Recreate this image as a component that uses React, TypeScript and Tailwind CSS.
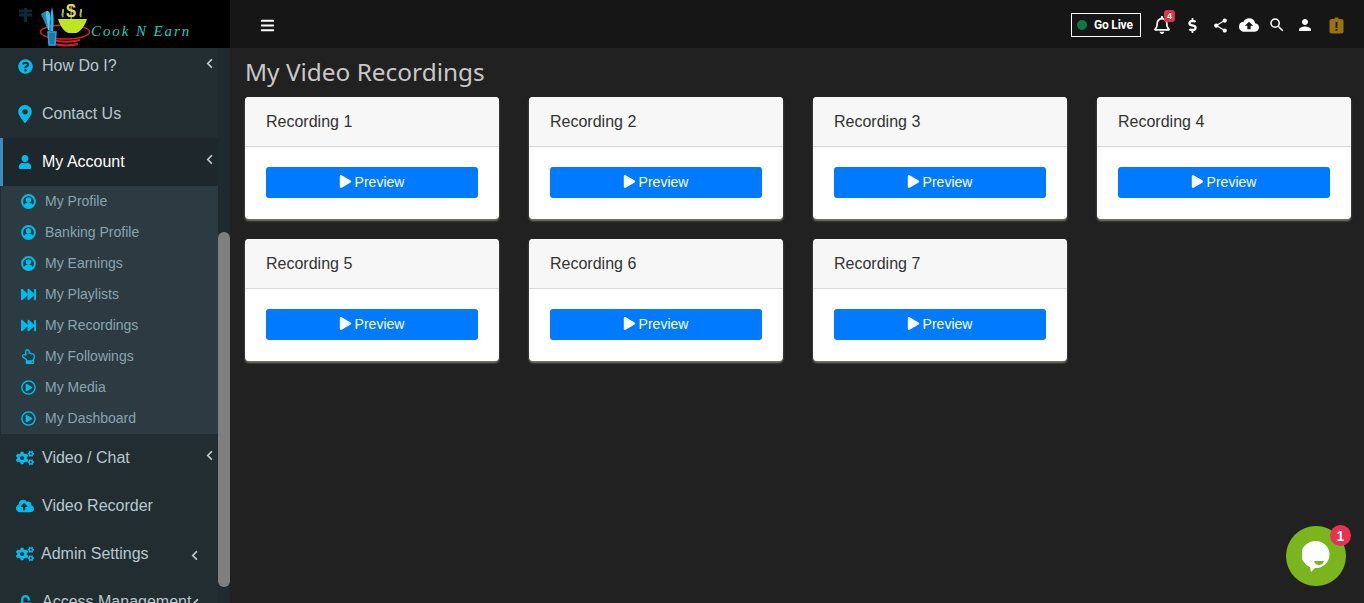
import type { ReactNode } from "react";
import {
  FaBars,
  FaChevronLeft,
  FaCloudUploadAlt,
  FaCogs,
  FaDollarSign,
  FaFastForward,
  FaMapMarkerAlt,
  FaPlay,
  FaQuestionCircle,
  FaRegBell,
  FaRegHandPointUp,
  FaRegPlayCircle,
  FaUnlockAlt,
  FaUser,
} from "react-icons/fa";
import { MdCloudUpload, MdPerson, MdSearch, MdShare } from "react-icons/md";

function UserRing() {
  return (
    <svg width="15" height="15" viewBox="0 0 15 15" className="shrink-0">
      <circle cx="7.500" cy="7.500" r="6.400" fill="none" stroke="currentColor" strokeWidth="2" />
      <circle cx="7.500" cy="6" r="2.700" fill="currentColor" />
      <path d="M2.500 12c1-2.600 3-3.400 5-3.400s4 .8 5 3.400c-1.300 1.300-3 2-5 2s-3.700-.7-5-2z" fill="currentColor" />
    </svg>
  );
}

const subItems: { label: string; icon: ReactNode }[] = [
  { label: "My Profile", icon: <UserRing /> },
  { label: "Banking Profile", icon: <UserRing /> },
  { label: "My Earnings", icon: <UserRing /> },
  { label: "My Playlists", icon: <FaFastForward /> },
  { label: "My Recordings", icon: <FaFastForward /> },
  { label: "My Followings", icon: <FaRegHandPointUp /> },
  { label: "My Media", icon: <FaRegPlayCircle /> },
  { label: "My Dashboard", icon: <FaRegPlayCircle /> },
];

const recordings = [1, 2, 3, 4, 5, 6, 7];

function Logo() {
  return (
    <div className="flex h-12 w-[230px] shrink-0 items-start overflow-hidden bg-black">
      <svg width="76" height="48" viewBox="15 0 76 48" className="ml-[15px] shrink-0">
        <path d="M19 11h13M19 15h13M25.500 8v14" stroke="#0b2a33" strokeWidth="3" fill="none" />
        <ellipse cx="65" cy="32" rx="24.500" ry="7" fill="none" stroke="#d3202a" strokeWidth="1.500" />
        <path d="M52 40c9 2 20 2 28 0M54 44c8 2 16 2 24 0" fill="none" stroke="#d3202a" strokeWidth="2" />
        <path d="M41 14l5-3 6 19-3 2z" fill="#2b86ad" />
        <path d="M47 11c3 0 4 5 3 10l-1 9h-1l-1-9c-1-5-2-10 0-10z" fill="#4cc4ee" />
        <path d="M52 7c2 7 2 15 1 24h-2c-1-9-1-17 1-24z" fill="#2cb3e8" />
        <path d="M48 32h8l-1 13h-6z" fill="#1f78a5" stroke="#2ba6dc" strokeWidth="1.500" />
        <path d="M58 19H87C85 26 80 32 76 33H69C64 32 60 26 58 19z" fill="#bde61f" />
        <path d="M63 17c-2-3 1-5 0-8M81 17c-2-3 1-5 0-8" stroke="#a3b84a" strokeWidth="2" fill="none" />
        <text x="66" y="17" fill="#dcdc50" fontSize="18" fontWeight="700" fontFamily="'Liberation Sans', sans-serif">
          $
        </text>
      </svg>
      <span className="mt-[22px] font-['Liberation_Serif',serif] text-[15px] leading-[18px] tracking-[1.9px] text-[#1fcdb4] italic">
        Cook N Earn
      </span>
    </div>
  );
}

function MenuItem({
  icon,
  label,
  chevron,
  active,
  gap = "ml-[10px]",
  chevronClass = "ml-auto mr-[3px] -mt-[6px]",
}: {
  icon: ReactNode;
  label: string;
  chevron?: boolean;
  active?: boolean;
  gap?: string;
  chevronClass?: string;
}) {
  return (
    <li
      className={`flex h-12 items-center whitespace-nowrap text-base ${
        active ? "border-l-[3px] border-[#3c8dbc] bg-[#1e282c] pl-[15px] font-medium text-white" : "pl-[18px] text-[#b8c7ce]"
      }`}
    >
      <span className="flex w-[14px] shrink-0 justify-center text-[15px] text-[#00bcea] [&>svg]:shrink-0">{icon}</span>
      <span className={gap}>{label}</span>
      {chevron ? <FaChevronLeft className={`shrink-0 text-[11px] text-[#b8c7ce] ${chevronClass}`} /> : null}
    </li>
  );
}

function Sidebar() {
  return (
    <aside className="flex h-[603px] w-[230px] shrink-0 flex-col overflow-hidden bg-[#222d32]">
      <Logo />
      <div className="flex min-h-0 flex-1 overflow-hidden">
        <ul className="-mt-[6px] w-[218px] shrink-0">
          <MenuItem icon={<FaQuestionCircle className="text-[15px]" />} label="How Do I?" chevron />
          <MenuItem icon={<FaMapMarkerAlt className="-ml-[1px] text-[18px]" />} label="Contact Us" />
          <MenuItem icon={<FaUser className="-ml-[1px] text-[14px]" />} label="My Account" chevron active />
          <li className="ml-px bg-[#2c3b41]">
            <ul className="h-[248px]">
              {subItems.map((item) => (
                <li key={item.label} className="flex h-[31px] items-center pl-[20px] text-[14px] text-[#8aa4af]">
                  <span className="flex w-[14px] shrink-0 justify-center text-[15px] text-[#00bcea] [&>svg]:shrink-0">
                    {item.icon}
                  </span>
                  <span className="ml-[10px]">{item.label}</span>
                </li>
              ))}
            </ul>
          </li>
          <MenuItem icon={<FaCogs className="text-[18px]" />} label="Video / Chat" chevron />
          <MenuItem icon={<FaCloudUploadAlt className="text-[18px]" />} label="Video Recorder" />
          <MenuItem
            icon={<FaCogs className="text-[18px]" />}
            label="Admin Settings"
            chevron
            gap="ml-[9px]"
            chevronClass="ml-auto mr-[18px] mt-[3px]"
          />
          <MenuItem
            icon={<FaUnlockAlt className="text-[15px]" />}
            label="Access Management"
            chevron
            chevronClass="-ml-[1px] mt-[3px]"
          />
        </ul>
        <div className="w-3 shrink-0 bg-[#1f2a2f]">
          <div className="mt-[184px] h-[355px] w-3 rounded-md bg-[#7f7f7f]" />
        </div>
      </div>
    </aside>
  );
}

function ClipboardAlert() {
  return (
    <svg width="15" height="17" viewBox="0 0 15 17">
      <rect x="0.500" y="2" width="14" height="14.500" rx="2" fill="#9a7210" />
      <rect x="5.500" y="0.500" width="4" height="3" rx="1" fill="#9a7210" />
      <rect x="6.600" y="5" width="1.800" height="6" fill="#1f1a08" />
      <rect x="6.600" y="12" width="1.800" height="1.800" fill="#1f1a08" />
    </svg>
  );
}

function Topbar() {
  return (
    <header className="flex h-12 shrink-0 items-center bg-[#161616] pl-[30px] pr-[20px] pt-[2px] text-white">
      <FaBars className="text-[15px]" />
      <div className="ml-auto flex items-center">
        <div className="flex h-6 w-[70px] items-center border border-white pl-[5px] font-['Roboto',sans-serif] text-xs font-bold">
          <span className="h-[10px] w-[10px] rounded-full bg-[#0a7a43]" />
          <span className="ml-[7px] tracking-[-0.2px]">Go Live</span>
        </div>
        <div className="relative ml-[13px] flex w-[16px] justify-center">
          <FaRegBell className="shrink-0 text-[18px]" />
          <span className="absolute -right-[5px] -top-[6px] flex h-[12px] w-[11px] items-center justify-center rounded-[3px] bg-[#dc3545] font-['Liberation_Sans',sans-serif] text-[9px] font-bold leading-none">
            4
          </span>
        </div>
        <FaDollarSign className="ml-[15px] text-[15px]" />
        <MdShare className="ml-[12px] text-[17px]" />
        <MdCloudUpload className="ml-[10px] text-[20px]" />
        <MdSearch className="ml-[9px] text-[18px]" />
        <MdPerson className="ml-[10px] text-[18px]" />
        <span className="ml-[15px] flex">
          <ClipboardAlert />
        </span>
      </div>
    </header>
  );
}

function RecordingCard({ n }: { n: number }) {
  return (
    <div className="h-[122px] overflow-hidden rounded-[4px] bg-white shadow-[0_2px_2px_rgba(190,190,170,0.55)]">
      <div className="flex h-[50px] items-center border-b border-[#d9d9d9] bg-[#f7f7f7] pl-[21px] text-base text-[#333333]">
        Recording {n}
      </div>
      <div className="px-[21px] pt-[20px]">
        <button
          type="button"
          className="flex h-[31px] w-full items-center justify-center rounded-[3px] bg-[#007bff] pb-[2px] pr-[1px] text-sm text-white"
        >
          <FaPlay className="mr-[3px] text-[13px]" />
          Preview
        </button>
      </div>
    </div>
  );
}

export default function App() {
  return (
    <div className="flex h-[603px] w-full overflow-hidden bg-[#212121] font-['Liberation_Sans',Arial,sans-serif]">
      <Sidebar />
      <div className="flex min-w-0 flex-1 flex-col">
        <Topbar />
        <main className="pl-[15px] pr-[13px]">
          <h1 className="h-[49px] pt-[6px] font-['Noto_Sans',sans-serif] text-[24.4px] leading-[36px] text-[#c8c8c8]">
            My Video Recordings
          </h1>
          <div className="grid grid-cols-[repeat(4,254px)] gap-x-[30px] gap-y-5">
            {recordings.map((n) => (
              <RecordingCard key={n} n={n} />
            ))}
          </div>
        </main>
      </div>
      <div className="fixed bottom-[17px] right-[18px] flex h-[60px] w-[60px] items-center justify-center rounded-full bg-[#7ab51d]">
        <svg width="28" height="31" viewBox="0 0 28 31">
          <path d="M14 0a14 13.500 0 1 1-1 27L9 31l-1-5A14 13.500 0 0 1 14 0z" fill="#fff" />
          <path d="M12 20h10c-1 3-3 4-5 4s-4-1-5-4z" fill="#7ab51d" />
        </svg>
        <span className="absolute -right-[5px] -top-[1px] flex h-[21px] w-[21px] items-center justify-center rounded-full bg-[#e8304f] text-sm font-bold text-white">
          1
        </span>
      </div>
    </div>
  );
}
